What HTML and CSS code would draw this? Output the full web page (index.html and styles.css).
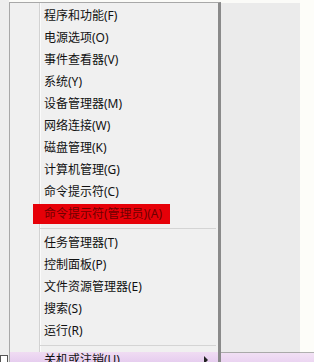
FILE: index.html
```html
<!DOCTYPE html>
<html lang="zh-CN">

<head>
    <meta charset="UTF-8">
    <meta name="viewport" content="width=device-width, initial-scale=1.0">
    <title>Win+X 菜单</title>
    <link rel="stylesheet" href="styles.css">
</head>

<body>
    <div class="screen">
        <div class="strip">
            <div class="tinyBox"></div>
        </div>

        <div class="menu">
            <div class="item">程序和功能(F)</div>
            <div class="item">电源选项(O)</div>
            <div class="item">事件查看器(V)</div>
            <div class="item">系统(Y)</div>
            <div class="item">设备管理器(M)</div>
            <div class="item">网络连接(W)</div>
            <div class="item">磁盘管理(K)</div>
            <div class="item">计算机管理(G)</div>
            <div class="item">命令提示符(C)</div>
            <div class="item marked"><span class="markLabel">命令提示符(管理员)(A)</span></div>
            <div class="sep"></div>
            <div class="item">任务管理器(T)</div>
            <div class="item">控制面板(P)</div>
            <div class="item">文件资源管理器(E)</div>
            <div class="item">搜索(S)</div>
            <div class="item">运行(R)</div>
            <div class="sep"></div>
            <div class="item last">关机或注销(U)<span class="arrow"></span></div>
        </div>

        <div class="panel"></div>
        <div class="rest"></div>
    </div>
</body>

</html>
```

FILE: styles.css
```css
html,
body {
    height: 100%;
}

body {
    margin: 0;
    width: 314px;
    height: 362px;
    overflow: hidden;
    background: #fbfbf8;
    font-family: "Noto Sans", "Noto Sans CJK SC", sans-serif;
    font-size: 12px;
    color: #111;
}

.screen {
    display: flex;
    height: 362px;
    overflow: hidden;
}

.strip {
    width: 9px;
    background: #eeeeee;
    display: flex;
    flex-direction: column;
}

.tinyBox {
    margin-top: auto;
    width: 6px;
    height: 6px;
    border: 1px solid #555;
    border-bottom: none;
    background: #fff;
}

.menu {
    margin-top: 2px;
    width: 208px;
    border-top: 1px solid #a8a8a8;
    border-left: 1px solid #a8a8a8;
    border-right: 3px solid #8a8a8a;
    padding-top: 2px;
    overflow: hidden;
    background:
        linear-gradient(to top, #e6cdef 0, #f0dcf3 10px, transparent 10px),
        linear-gradient(to right, transparent 29px, #d2d2d2 29px, #d2d2d2 30px, #fbfbfb 30px, #fbfbfb 31px, transparent 31px),
        #f0f0f0;
    display: flex;
    flex-direction: column;
}

.item {
    flex-shrink: 0;
    height: 22px;
    line-height: 22px;
    padding-left: 34px;
    white-space: nowrap;
    display: flex;
    align-items: center;
}

/* hand-drawn red box on the admin entry */
.marked {
    padding-left: 23px;
}

.markLabel {
    display: inline-block;
    height: 20px;
    line-height: 20px;
    padding: 0 8px 0 11px;
    background: #e60008;
    color: #6e0000;
}

.sep {
    flex-shrink: 0;
    height: 1px;
    margin: 3px 2px 3px 30px;
    background: #d4d4d4;
}

.arrow {
    margin-left: auto;
    margin-right: 10px;
    width: 0;
    height: 0;
    border-top: 4px solid transparent;
    border-bottom: 4px solid transparent;
    border-left: 4px solid #222;
}

.panel {
    margin-top: 3px;
    width: 79px;
    background:
        linear-gradient(to top, #ead3f1 0, #f1dff4 9px, #a9a9a9 9px, #a9a9a9 10px, transparent 10px),
        #ebebeb;
}

.rest {
    flex: 1;
    background:
        linear-gradient(to top, #ecd6f2 0, #f3e3f5 9px, #b0b0b0 9px, #b0b0b0 10px, transparent 10px),
        #fdfdf9;
}
```
